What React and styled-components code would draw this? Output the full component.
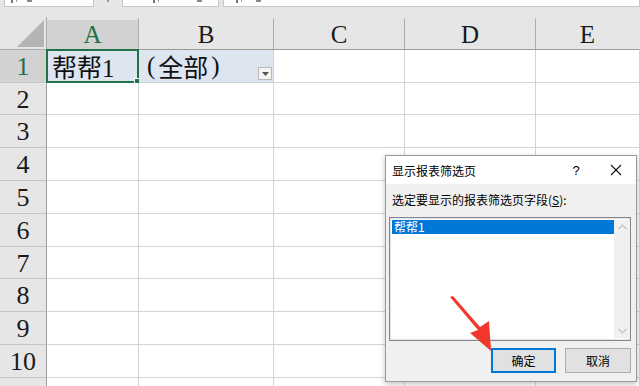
import React from "react";
import styled, { createGlobalStyle } from "styled-components";

const GlobalStyle = createGlobalStyle`
  html, body {
    margin: 0;
    padding: 0;
    background: #ffffff;
    overflow: hidden;
  }
  body {
    width: 640px;
    height: 386px;
    font-family: "Liberation Serif", "Noto Sans CJK SC", serif;
  }
`;

const COLS = [
  { key: "A", width: 92 },
  { key: "B", width: 135 },
  { key: "C", width: 131 },
  { key: "D", width: 131 },
  { key: "E", width: 104 },
];

// row 11 only peeks in at the bottom edge, its number is below the fold
const ROW_HEIGHTS = [33, 32, 33, 33, 33, 33, 32, 33, 33, 33, 33];
const VISIBLE_LABELS = 10;

const Page = styled.div`
  position: relative;
  width: 640px;
  height: 386px;
  overflow: hidden;
  background: #e6e6e6;
`;

const FormulaStrip = styled.div`
  display: flex;
  align-items: flex-start;
  height: 17px;
  padding-left: 4px;
  box-sizing: border-box;
`;

const FieldBox = styled.div`
  width: ${(p) => p.$w}px;
  height: 7px;
  margin-right: ${(p) => p.$gap || 0}px;
  background: #ffffff;
  border: 1px solid #c6c6c6;
  border-top: none;
  box-sizing: border-box;
  flex: ${(p) => (p.$grow ? 1 : "none")};
  display: flex;
  align-items: flex-start;
  padding-left: ${(p) => p.$pad || 6}px;
`;

const Caret = styled.div`
  width: 28px;
  height: 8px;
  display: flex;
  justify-content: center;
`;

const Sheet = styled.div`
  display: grid;
  grid-template-columns: 47px ${COLS.map((c) => c.width + "px").join(" ")};
  grid-template-rows: 33px ${ROW_HEIGHTS.map((h) => h + "px").join(" ")};
  background: #ffffff;
`;

const Corner = styled.div`
  background: #e6e6e6;
  border-right: 1px solid #ababab;
  border-bottom: 1px solid #ababab;
  display: flex;
  align-items: flex-end;
  justify-content: flex-end;
  padding: 0 2px 2px 0;
  box-sizing: border-box;
`;

const ColHead = styled.div`
  background: ${(p) => (p.$active ? "#d2d2d2" : "#e6e6e6")};
  color: ${(p) => (p.$active ? "#217346" : "#1a1a1a")};
  border-right: 1px solid ${(p) => (p.$last ? "transparent" : "#ababab")};
  border-bottom: 1px solid #9b9b9b;
  border-top: 3px solid #e6e6e6;
  box-sizing: border-box;
  font-size: 25px;
  line-height: 30px;
  text-align: center;
`;

const RowHead = styled.div`
  background: ${(p) => (p.$active ? "#d2d2d2" : "#e6e6e6")};
  color: ${(p) => (p.$active ? "#217346" : "#1a1a1a")};
  border-right: 1px solid #9e9e9e;
  border-bottom: 1px solid #c6c6c6;
  box-sizing: border-box;
  font-size: 26px;
  padding-top: 2px;
  display: flex;
  align-items: center;
  justify-content: center;
`;

const Cell = styled.div`
  position: relative;
  background: ${(p) => (p.$fill ? "#dde6f0" : "#ffffff")};
  border-right: 1px solid #d4d4d4;
  border-bottom: 1px solid #d4d4d4;
  box-sizing: border-box;
  display: flex;
  align-items: center;
  padding-left: ${(p) => p.$indent || 5}px;
  font-size: 25px;
  color: #111;
  white-space: nowrap;
`;

const Paren = styled.span`
  margin: 0 3px;
`;

const Selection = styled.div`
  position: absolute;
  left: -1px;
  top: -1px;
  right: -1px;
  bottom: -1px;
  border: 2px solid #217346;
  pointer-events: none;
`;

const FillHandle = styled.div`
  position: absolute;
  right: -4px;
  bottom: -4px;
  width: 5px;
  height: 5px;
  background: #217346;
  border: 1px solid #ffffff;
`;

const DropButton = styled.div`
  position: absolute;
  right: 1px;
  bottom: 2px;
  width: 14px;
  height: 13px;
  background: #f4f4f4;
  border: 1px solid #b8b8b8;
  box-sizing: border-box;
  display: flex;
  align-items: center;
  justify-content: center;
`;

const Dialog = styled.div`
  position: absolute;
  left: 385px;
  top: 155px;
  width: 252px;
  height: 227px;
  background: #f0f0f0;
  border: 1px solid #9a9a9a;
  box-sizing: border-box;
  box-shadow: 0 2px 6px rgba(0, 0, 0, 0.25);
  display: flex;
  flex-direction: column;
  font-family: "Noto Sans CJK SC", "Liberation Sans", sans-serif;
  font-size: 12px;
  color: #000;
`;

const TitleBar = styled.div`
  height: 28px;
  background: #ffffff;
  display: flex;
  align-items: center;
  padding-left: 6px;
  flex: none;
`;

const Title = styled.span`
  flex: 1;
`;

const TitleButton = styled.div`
  width: 40px;
  height: 28px;
  display: flex;
  align-items: center;
  justify-content: center;
  font-family: "Liberation Sans", sans-serif;
  font-size: 13px;
`;

const Body = styled.div`
  flex: 1;
  display: flex;
  flex-direction: column;
  padding: 8px 5px 8px 3px;
`;

const Label = styled.div`
  line-height: 16px;
  padding-left: 3px;
  margin-bottom: 9px;
  u {
    text-decoration: underline;
  }
`;

const ListBox = styled.div`
  height: 124px;
  background: #ffffff;
  border: 1px solid #828790;
  box-shadow: inset 0 0 0 1px #e3e3e3;
  box-sizing: border-box;
  display: flex;
  padding: 2px 0 2px 2px;
`;

const Items = styled.div`
  flex: 1;
`;

const Item = styled.div`
  height: 14px;
  line-height: 14px;
  padding-left: 2px;
  background: ${(p) => (p.$selected ? "#0078d7" : "transparent")};
  color: ${(p) => (p.$selected ? "#ffffff" : "#000")};
`;

const ScrollBar = styled.div`
  width: 16px;
  background: #f0f0f0;
  display: flex;
  flex-direction: column;
  justify-content: space-between;
  align-items: center;
  padding: 4px 0;
`;

const Buttons = styled.div`
  margin-top: auto;
  display: flex;
  justify-content: flex-end;
  gap: 9px;
`;

const Button = styled.div`
  width: ${(p) => p.$w}px;
  height: 25px;
  box-sizing: border-box;
  background: #e1e1e1;
  border: ${(p) => (p.$default ? "2px solid #0078d7" : "1px solid #adadad")};
  display: flex;
  align-items: center;
  justify-content: center;
`;

const Arrow = styled.svg`
  position: absolute;
  left: 0;
  top: 0;
  pointer-events: none;
`;

const Chevron = ({ up }) => (
  <svg width="9" height="6" viewBox="0 0 9 6">
    <path
      d={up ? "M0.5 5 L4.5 1 L8.5 5" : "M0.5 1 L4.5 5 L8.5 1"}
      fill="none"
      stroke="#c2c2c2"
      strokeWidth="1.2"
    />
  </svg>
);

// bottoms of the clipped glyphs that peek out of the formula bar fields
const Ink = ({ w }) => (
  <svg width={w} height="4" viewBox={`0 0 ${w} 4`}>
    <rect x="0" y="0" width="2" height="3" fill="#777" />
    <rect x="5" y="0" width="1" height="2" fill="#999" />
    <rect x={w - 6} y="0" width="5" height="2" fill="#888" />
  </svg>
);

export default function App() {
  return (
    <Page>
      <GlobalStyle />
      <FormulaStrip>
        <FieldBox $w={90}>
          <Ink w={22} />
        </FieldBox>
        <Caret>
          <svg width="4" height="3" viewBox="0 0 4 3">
            <rect x="1" y="0" width="2" height="2" fill="#999" />
          </svg>
        </Caret>
        <FieldBox $w={97} $gap={4} $pad={30}>
          <Ink w={50} />
        </FieldBox>
        <FieldBox $grow $pad={12}>
          <Ink w={26} />
        </FieldBox>
      </FormulaStrip>

      <Sheet>
        <Corner>
          <svg width="27" height="27" viewBox="0 0 27 27">
            <polygon points="0,27 27,27 27,0" fill="#b4b4b4" />
          </svg>
        </Corner>
        {COLS.map((c, i) => (
          <ColHead key={c.key} $active={c.key === "A"} $last={i === COLS.length - 1}>
            {c.key}
          </ColHead>
        ))}

        {ROW_HEIGHTS.map((h, r) => (
          <React.Fragment key={r}>
            <RowHead $active={r === 0}>{r < VISIBLE_LABELS ? r + 1 : ""}</RowHead>
            {COLS.map((c) => {
              if (r === 0 && c.key === "A") {
                return (
                  <Cell key={c.key} $fill>
                    帮帮1
                    <Selection>
                      <FillHandle />
                    </Selection>
                  </Cell>
                );
              }
              if (r === 0 && c.key === "B") {
                return (
                  <Cell key={c.key} $fill $indent={5}>
                    <Paren>(</Paren>全部<Paren>)</Paren>
                    <DropButton>
                      <svg width="7" height="4" viewBox="0 0 7 4">
                        <polygon points="0,0 7,0 3.5,4" fill="#555" />
                      </svg>
                    </DropButton>
                  </Cell>
                );
              }
              return <Cell key={c.key} />;
            })}
          </React.Fragment>
        ))}
      </Sheet>

      <Dialog>
        <TitleBar>
          <Title>显示报表筛选页</Title>
          <TitleButton>?</TitleButton>
          <TitleButton>
            <svg width="12" height="12" viewBox="0 0 12 12">
              <path d="M1 1 L11 11 M11 1 L1 11" stroke="#111" strokeWidth="1.1" />
            </svg>
          </TitleButton>
        </TitleBar>
        <Body>
          <Label>
            选定要显示的报表筛选页字段(<u>S</u>):
          </Label>
          <ListBox>
            <Items>
              <Item $selected>帮帮1</Item>
            </Items>
            <ScrollBar>
              <Chevron up />
              <Chevron />
            </ScrollBar>
          </ListBox>
          <Buttons>
            <Button $w={65} $default>
              确定
            </Button>
            <Button $w={66}>取消</Button>
          </Buttons>
        </Body>
      </Dialog>

      <Arrow width="640" height="386" viewBox="0 0 640 386">
        <polygon
          points="450,297 453,296 480,327 489,321 491,351 470,333 478,330"
          fill="#f2382c"
        />
      </Arrow>
    </Page>
  );
}
